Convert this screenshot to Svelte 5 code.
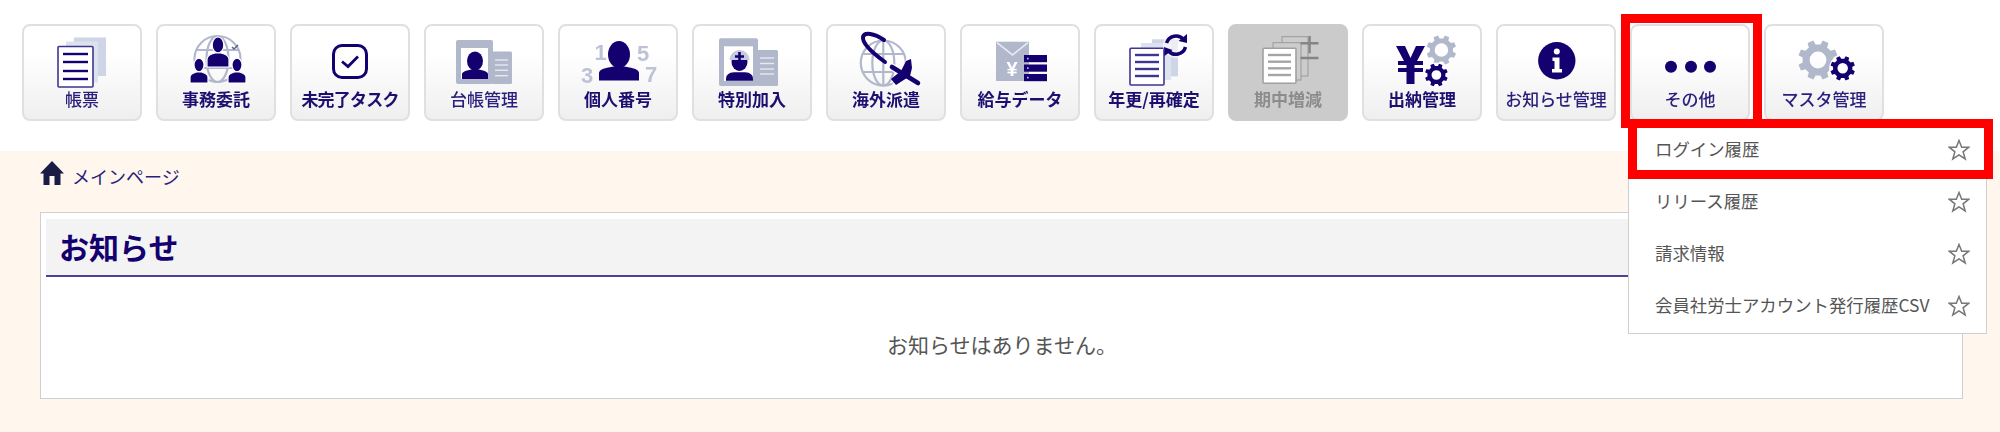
<script>
  const items = ['帳票','事務委託','未完了タスク','台帳管理','個人番号','特別加入','海外派遣','給与データ','年更/再確定','期中増減','出納管理','お知らせ管理','その他','マスタ管理'];
  const menu = ['ログイン履歴','リリース履歴','請求情報','会員社労士アカウント発行履歴CSV'];
  const navy = '#14006e';
  const gray = '#b1b8cc';

  function gear(cx, cy, r, teeth = 8, hole = 0.45) {
    const pts = [];
    const step = (Math.PI * 2) / teeth;
    const inner = r * 0.78;
    for (let i = 0; i < teeth; i++) {
      const a = i * step + step / 2;
      const w = step * 0.2;
      const w2 = step * 0.3;
      const p = (rad, ang) => `${(cx + rad * Math.cos(ang)).toFixed(2)} ${(cy + rad * Math.sin(ang)).toFixed(2)}`;
      pts.push(p(inner, a - w2), p(r, a - w), p(r, a + w), p(inner, a + w2));
    }
    const h = r * hole;
    return `M${pts.join('L')}Z M${cx - h} ${cy}a${h} ${h} 0 1 0 ${2 * h} 0a${h} ${h} 0 1 0 ${-2 * h} 0Z`;
  }
</script>

{#snippet person(cx, hy, rx, ry, w, top, bottom)}
  <ellipse cx={cx} cy={hy} rx={rx} ry={ry} fill={navy} />
  <path d="M{cx - w} {bottom}V{top + (bottom - top) * 0.45}Q{cx - w} {top + 2} {cx - rx * 0.5} {top}L{cx + rx * 0.5} {top}Q{cx + w} {top + 2} {cx + w} {top + (bottom - top) * 0.45}V{bottom}Z" fill={navy} />
{/snippet}

{#snippet doc(x, y, w, h, lines, stroke, lineColor)}
  <rect x={x} y={y} width={w} height={h} fill="#fff" stroke={stroke} stroke-width="1.6" rx="1" />
  {#each lines as ly}
    <path d="M{x + 5} {ly}H{x + w - 5}" stroke={lineColor} stroke-width="2.4" />
  {/each}
{/snippet}

{#snippet card(x, y, w, h, w2, y2, lines)}
  <rect x={x} y={y} width={w} height={h} rx="2" fill={gray} />
  <rect x={x + w - 1} y={y2} width={w2} height={y + h - y2} rx="1.5" fill={gray} />
  <rect x={x + 5} y={y + 8} width={w - 10} height={h - 13} fill="#fff" />
  {#each lines as ly}
    <path d="M{x + w + 2} {ly}H{x + w + w2 - 5}" stroke="#e6e9f0" stroke-width="1.4" />
  {/each}
{/snippet}

<div class="page">
  <nav class="nav">
    {#each items as label, i}
      <button class="btn" class:off={i === 9} class:thin={[0,3,11,12,13].includes(i)} class:tight={i === 2}>
        <svg class="ico" viewBox="0 0 120 64" width="120" height="64" aria-hidden="true">
          {#if i === 0}
            <rect x="52" y="13.500" width="32" height="38.500" fill="#cdd5e6" />
            <rect x="44" y="17.500" width="32" height="41" fill="#dde2ef" />
            {@render doc(36, 22.500, 35, 40.500, [30, 38, 47, 55], '#3f3590', navy)}
          {:else if i === 1}
            <g fill="none" stroke={gray} stroke-width="2.2">
              <circle cx="61.5" cy="35" r="23" />
              <ellipse cx="61.5" cy="35" rx="11" ry="23" />
              <path d="M40 26H83M40 44H83" />
            </g>
            <path d="M76 23l2 2 4-4" stroke="#5a5f8c" stroke-width="1.5" fill="none" />
            <g stroke="#fff" stroke-width="1.2">
              {@render person(62, 21, 5.8, 8, 11, 29, 43)}
              {@render person(43, 41, 5, 6.8, 9, 48, 59)}
              {@render person(81, 41, 5, 6.8, 9, 48, 59)}
            </g>
          {:else if i === 2}
            <rect x="43.5" y="21.5" width="33" height="32" rx="8.500" fill="#fff" stroke={navy} stroke-width="3" />
            <path d="M52 37.500l6 5 10-10" fill="none" stroke={navy} stroke-width="2.800" />
          {:else if i === 3}
            {@render card(32, 16, 37, 44, 20, 27.500, [36, 41, 46.300, 51.700])}
            {@render person(51, 37, 8, 9.500, 13, 45.500, 55)}
          {:else if i === 4}
            <text x="42.5" y="36" class="dig">1</text>
            <text x="85" y="36.500" class="dig">5</text>
            <text x="29" y="58.500" class="dig">3</text>
            <text x="93" y="57.500" class="dig">7</text>
            {@render person(61, 30.500, 11, 13.500, 20, 42.500, 56.500)}
          {:else if i === 5}
            {@render card(27, 14.300, 39, 47.700, 21, 26, [34, 39.500, 45, 50])}
            <ellipse cx="47.500" cy="38" rx="8" ry="9" fill={navy} />
            <path d="M37.500 36a10 10 0 0 1 20 0Z" fill="#c4cbdc" />
            <path d="M43 32.500h9M47.500 28v9" stroke={navy} stroke-width="2.600" />
            <path d="M34 56.700v-2q0-6 8-6.500h11q8 .5 8 6.500v2Z" fill={navy} />
          {:else if i === 6}
            <g fill="none" stroke={gray} stroke-width="2.200">
              <circle cx="57.300" cy="39" r="22.500" />
              <ellipse cx="57.300" cy="39" rx="11" ry="22.500" />
              <path d="M36 30H78M36 48H78" />
              <path d="M57.300 16.500V61.500" />
            </g>
            <path d="M59 38C48 30 36 20 37 13C38 8 48 9 58 16" fill="none" stroke={navy} stroke-width="4" stroke-linecap="round" />
            <g stroke="#fff" stroke-width="7" stroke-linecap="round">
              <path d="M66 43L92 59" />
              <path d="M84 35L78 51L70 61" />
            </g>
            <path d="M66 43L92 59" stroke={navy} stroke-width="4.600" stroke-linecap="round" />
            <path d="M85 35L80 37L75 47L65 55L70 61L84 52L86 44Z" fill={navy} />
          {:else if i === 7}
            <rect x="36" y="17.700" width="33" height="39.300" fill={gray} />
            <path d="M37 18.700L52.500 31L68 18.700" fill="none" stroke="#e9ebf2" stroke-width="1.600" />
            <text x="52" y="52" class="yen">¥</text>
            {#each [31, 40.500, 50] as y}
              <rect x="64" y={y} width="23" height="7.200" fill={navy} />
              <rect x="67" y={y + 2.800} width="1.600" height="1.600" fill="#c9cde2" />
            {/each}
          {:else if i === 8}
            <rect x="58" y="15.300" width="26" height="37" fill="#cdd5e6" />
            <rect x="47" y="19" width="30" height="37" fill="#dde2ef" />
            {@render doc(36, 24.300, 34, 36.700, [31, 38, 45, 52], '#3f3590', '#3f3590')}
            <circle cx="82" cy="21" r="13" fill="#fff" opacity=".6" />
            <path d="M72.500 19a10 10 0 0 1 17-3.500" fill="none" stroke={navy} stroke-width="3.500" />
            <path d="M91.500 23a10 10 0 0 1-17 4" fill="none" stroke={navy} stroke-width="3.500" />
            <path d="M93 10l0 9-8.500-2Z" fill={navy} />
            <path d="M70.500 32l-.5-9 8.500 3Z" fill={navy} />
          {:else if i === 9}
            <rect x="54" y="12.700" width="26" height="39.300" fill="#ccc" stroke="#9a9a9a" />
            <rect x="45" y="18.700" width="28" height="37.300" fill="#ccc" stroke="#9a9a9a" />
            {@render doc(35, 24.300, 33, 35, [31, 37.700, 44.300, 51], '#a0a0a0', '#a5a5a5')}
            <path d="M72.500 19.300H90.500M81.600 12V29.300M72.500 34H90.500" stroke="#858585" stroke-width="2.400" />
          {:else if i === 10}
            <path d={gear(79.400, 26, 15, 8, 0.45)} fill={gray} fill-rule="evenodd" />
            <path d="M34 22h9l5.500 12 5.500-12h9L55 37h6v4H52.500v3H61v4h-8.500v12h-8V48H36v-4h8.500v-3H36v-4h6Z" fill={navy} />
            <circle cx="74.400" cy="51" r="12.500" fill="#fff" opacity=".9" />
            <path d={gear(74.400, 51, 11.600, 8, 0.42)} fill={navy} fill-rule="evenodd" />
          {:else if i === 11}
            <circle cx="60.800" cy="36.700" r="18.700" fill={navy} />
            <circle cx="60.800" cy="27.500" r="3" fill="#fff" />
            <path d="M56.500 33.500h7v11.500h2.500v3.500h-10V45h2.500v-8h-2Z" fill="#fff" />
          {:else if i === 12}
            <circle cx="41" cy="42.700" r="6" fill={navy} />
            <circle cx="61" cy="42.700" r="6" fill={navy} />
            <circle cx="80" cy="42.700" r="6" fill={navy} />
          {:else if i === 13}
            <path d={gear(54, 36, 20, 8, 0.42)} fill={gray} fill-rule="evenodd" />
            <circle cx="78.700" cy="44.300" r="13.500" fill="#fff" />
            <path d={gear(78.700, 44.300, 12.500, 8, 0.42)} fill={navy} fill-rule="evenodd" />
          {/if}
        </svg>
        <span class="lab">{label}</span>
      </button>
    {/each}
  </nav>

  <main class="main">
    <div class="crumb">
      <svg class="home" viewBox="0 0 24 24" width="24" height="24" aria-hidden="true">
        <path d="M12 0L24 12.500H20.500V24H14.500V15H9.500V24H3.500V12.500H0Z" fill="#1b1b46" />
      </svg>
      <span>メインページ</span>
    </div>
    <section class="panel">
      <h2>お知らせ</h2>
      <p>お知らせはありません。</p>
    </section>
  </main>

  <ul class="drop">
    {#each menu as m}
      <li>
        <span>{m}</span>
        <svg viewBox="0 0 22 22" width="22" height="22" aria-hidden="true">
          <path d="M11 1.500L13.700 8.200H20.800L15.100 12.800L17.200 20L11 15.900L4.800 20L6.900 12.800L1.200 8.200H8.300Z" fill="#fff" stroke="#777" stroke-width="1.500" />
        </svg>
      </li>
    {/each}
  </ul>

  <div class="red red-a"></div>
  <div class="red red-b"></div>
</div>

<style>
  :global(body) {
    margin: 0;
    background: #fff;
  }
  .page {
    position: relative;
    width: 2000px;
    height: 432px;
    overflow: hidden;
    display: flex;
    flex-direction: column;
    font-family: "Noto Sans CJK JP", "Noto Sans", sans-serif;
  }
  .nav {
    display: flex;
    gap: 14px;
    height: 151px;
    box-sizing: border-box;
    padding: 24px 0 0 22px;
  }
  .btn {
    width: 120px;
    height: 97px;
    padding: 0;
    box-sizing: border-box;
    display: flex;
    flex-direction: column;
    align-items: center;
    border: 2px solid #e0e0e0;
    border-radius: 8px;
    background: linear-gradient(#ffffff 30%, #efefef);
    font-family: inherit;
    overflow: hidden;
  }
  .btn.off {
    background: #cbcbcb;
    border-color: #cbcbcb;
  }
  .ico {
    display: block;
    flex: none;
    margin: -2px -2px 0;
    filter: blur(0.35px);
  }
  .lab {
    font-size: 17px;
    line-height: 22px;
    font-weight: 700;
    color: #1c0f70;
    white-space: nowrap;
    filter: blur(0.3px);
  }
  .thin .lab {
    font-weight: 500;
    color: #2a1f7c;
  }
  .tight .lab {
    letter-spacing: -0.8px;
  }
  .off .lab {
    color: #8c8c8c;
  }
  .dig {
    font: 700 22px "Liberation Sans", sans-serif;
    fill: #bcc3d5;
    text-anchor: middle;
  }
  .yen {
    font: 700 20px "Liberation Sans", sans-serif;
    fill: #fff;
    text-anchor: middle;
  }
  .main {
    flex: 1;
    background: #fff7ee;
    padding: 10px 37px 0 40px;
  }
  .crumb {
    display: flex;
    align-items: center;
    gap: 8px;
    height: 24px;
    font-size: 18px;
    color: #2a1f7c;
  }
  .crumb span {
    padding-top: 5px;
  }
  .home {
    flex: none;
  }
  .panel {
    margin-top: 27px;
    height: 187px;
    box-sizing: border-box;
    border: 1.500px solid #cfcfcf;
    background: #fff;
    padding: 6px 0 0 5px;
  }
  h2 {
    margin: 0;
    height: 58px;
    box-sizing: border-box;
    padding-left: 13px;
    background: #f3f3f3;
    border-bottom: 2px solid #4d4396;
    font-size: 30px;
    line-height: 54px;
    font-weight: 700;
    color: #14006e;
  }
  p {
    margin: 52px 0 0;
    padding-right: 4px;
    text-align: center;
    font-size: 21px;
    line-height: 30px;
    color: #555;
  }
  .drop {
    position: absolute;
    left: 1628px;
    top: 121px;
    width: 359px;
    height: 213px;
    box-sizing: border-box;
    margin: 0;
    padding: 2px 0 0;
    list-style: none;
    background: #fff;
    border: 1.500px solid #cfcfcf;
    font-size: 17.400px;
    color: #555;
  }
  .drop li {
    height: 52px;
    display: flex;
    align-items: center;
    justify-content: space-between;
    padding: 0 16px 0 26px;
    white-space: nowrap;
  }
  .drop li span {
    padding-bottom: 3px;
  }
  .red {
    position: absolute;
    box-sizing: border-box;
    border: 9px solid #ff0000;
  }
  .red-a {
    left: 1621px;
    top: 14px;
    width: 141px;
    height: 114px;
  }
  .red-b {
    left: 1628px;
    top: 119px;
    width: 365px;
    height: 60px;
  }
</style>
